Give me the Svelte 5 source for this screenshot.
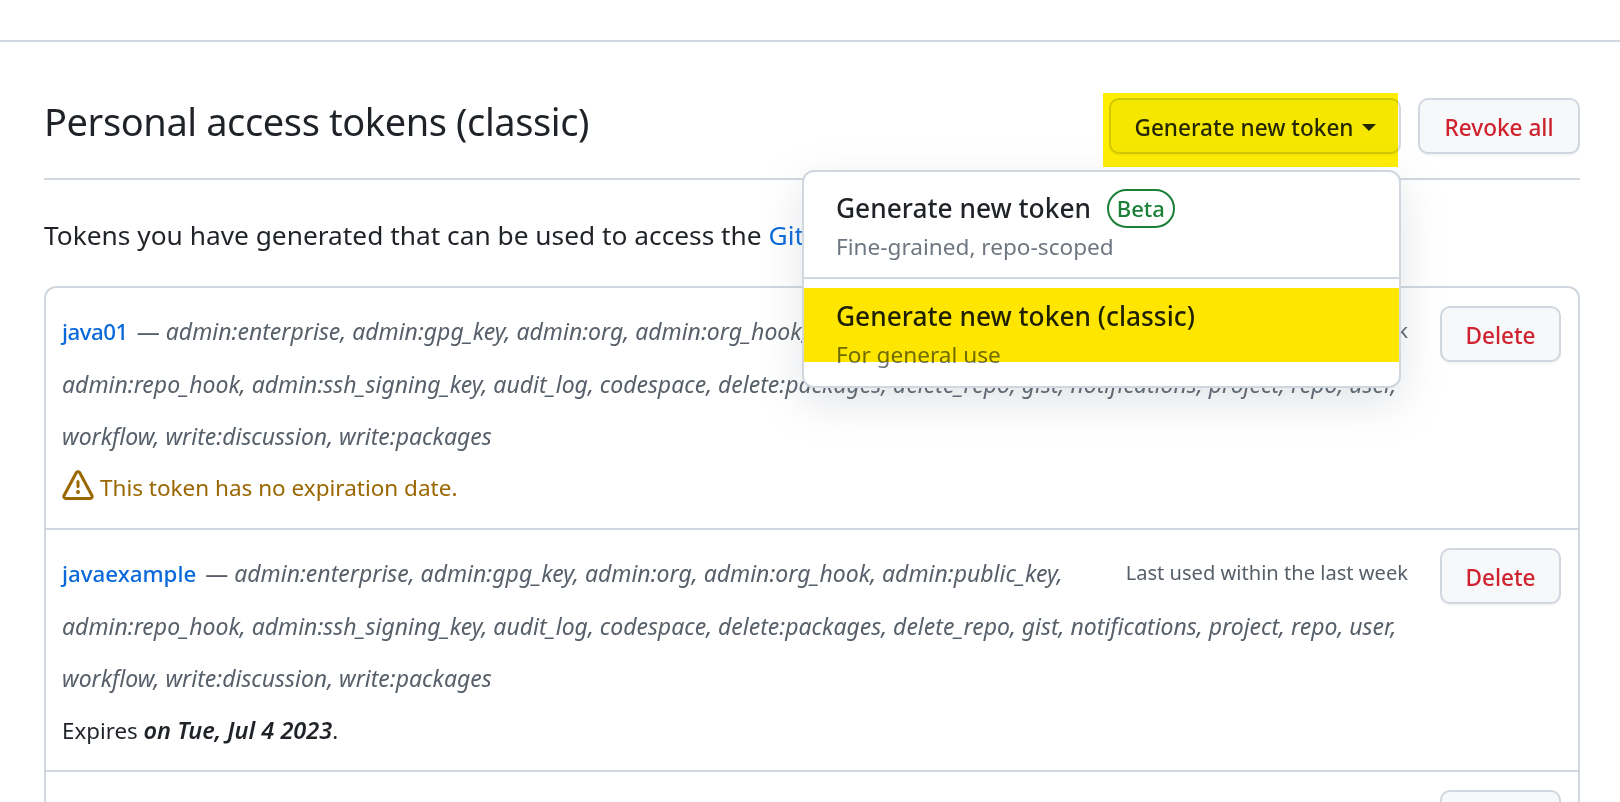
<script>
  const scopes = {
    l1: 'admin:enterprise, admin:gpg_key, admin:org, admin:org_hook, admin:public_key,',
    l2: 'admin:repo_hook, admin:ssh_signing_key, audit_log, codespace, delete:packages, delete_repo, gist, notifications, project, repo, user,',
    l3: 'workflow, write:discussion, write:packages'
  };
</script>

<div class="page">
  <div class="topbar"></div>
  <main class="content">
    <header class="subhead">
      <h2>Personal access tokens (classic)</h2>
      <div class="actions">
        <div class="gen-wrap">
          <button class="btn gen">Generate new token <span class="caret"></span></button>
          <div class="hl hl-btn"></div>
          <div class="menu">
            <div class="menu-item first">
              <div class="mi-title">Generate new token <span class="beta">Beta</span></div>
              <div class="mi-sub">Fine-grained, repo-scoped</div>
            </div>
            <div class="menu-item second">
              <div class="mi-title">Generate new token (classic)</div>
              <div class="mi-sub">For general use</div>
            </div>
            <div class="hl hl-item"></div>
          </div>
        </div>
        <button class="btn danger">Revoke all</button>
      </div>
    </header>
    <p class="intro">Tokens you have generated that can be used to access the <a href="#api">GitHub API</a>.</p>
    <div class="box">
      <div class="row">
        <div class="info">
          <span class="last">Last used within the last week</span>
          <a href="#t1" class="name short">java01</a> — <em>{scopes.l1}</em><br />
          <em>{scopes.l2}</em><br />
          <em>{scopes.l3}</em>
          <div class="warn">
            <svg viewBox="0 0 16 16" class="alert"><path fill="currentColor" d="M6.457 1.047c.659-1.234 2.427-1.234 3.086 0l6.082 11.378A1.75 1.75 0 0 1 14.082 15H1.918a1.75 1.75 0 0 1-1.543-2.575Zm1.763.707a.25.25 0 0 0-.44 0L1.698 13.132a.25.25 0 0 0 .22.368h12.164a.25.25 0 0 0 .22-.368Zm.53 3.996v2.5a.75.75 0 0 1-1.5 0v-2.5a.75.75 0 0 1 1.5 0ZM9 11a1 1 0 1 1-2 0 1 1 0 0 1 2 0Z"/></svg>
            This token has no expiration date.
          </div>
        </div>
        <button class="btn danger del">Delete</button>
      </div>
      <div class="row">
        <div class="info">
          <span class="last">Last used within the last week</span>
          <a href="#t2" class="name">javaexample</a> — <em>{scopes.l1}</em><br />
          <em>{scopes.l2}</em><br />
          <em>{scopes.l3}</em>
          <div class="exp">Expires <strong>on Tue, Jul 4 2023</strong>.</div>
        </div>
        <button class="btn danger del">Delete</button>
      </div>
      <div class="row">
        <div class="info"></div>
        <button class="btn danger del">Delete</button>
      </div>
    </div>
  </main>
</div>

<style>
  :global(html), :global(body) { margin: 0; background: #fff; overflow: hidden; }
  .page {
    height: 802px; overflow: hidden;
    font-family: "Noto Sans", "Open Sans", sans-serif;
    font-size: 23px; color: #1f2328;
  }
  .topbar { height: 40px; border-bottom: 2px solid #d0d7de; }
  .content { padding: 0 40px 0 44px; }
  .subhead {
    display: flex; justify-content: space-between; align-items: flex-start;
    height: 138px; padding-top: 56px; box-sizing: border-box;
    border-bottom: 2px solid #d0d7de;
  }
  h2 { margin: -2px 0 0; font-size: 38px; font-weight: 400; line-height: 50px; letter-spacing: -0.4px; }
  .actions { display: flex; gap: 17px; }
  .gen-wrap { position: relative; }
  .btn {
    font: inherit; font-size: 22.6px; font-weight: 500; height: 56px; box-sizing: border-box;
    border: 2px solid #d0d7de; border-radius: 10px; background: #f6f8fa; color: #24292f;
    padding: 2px 24px 0; box-shadow: 0 2px 0 rgba(31,35,40,.04); white-space: nowrap;
    display: flex; align-items: center;
  }
  .gen { width: 292px; justify-content: center; gap: 8px; }
  .caret { width: 0; height: 0; border: 7.5px solid transparent; border-top-color: currentColor; border-bottom: 0; }
  .danger { color: #cf222e; width: 162px; justify-content: center; }
  .del { width: 121px; flex: none; padding-top: 3px; margin-top: 1px; }
  .hl { position: absolute; background: #ffe600; mix-blend-mode: multiply; }
  .hl-btn { left: -6px; top: -5px; width: 295px; height: 74px; background: #ffee00; }
  .menu {
    position: absolute; z-index: 5; top: 72px; right: 0; width: 599px; height: 218px; box-sizing: border-box;
    background: #fff; border: 2px solid #d0d7de; border-radius: 12px;
    box-shadow: 0 14px 42px rgba(140,149,159,.25);
  }
  .menu-item { padding: 0 32px; box-sizing: border-box; }
  .first { height: 107px; padding-top: 18px; border-bottom: 2px solid #d0d7de; }
  .second { padding-top: 19px; }
  .mi-title { font-size: 26.3px; font-weight: 500; height: 36px; line-height: 36px; display: flex; align-items: center; gap: 9px; white-space: pre; }
  .mi-sub { font-size: 22.6px; color: #6e7781; line-height: 34px; margin-top: 4px; }
  .beta {
    color: #1a7f37; border: 2px solid #1a7f37; border-radius: 20px; font-size: 22px; font-weight: 500;
    line-height: 35px; padding: 0 8px;
  }
  .hl-item { left: 0; right: 0; top: 116px; height: 74px; }
  .intro { margin: 0; height: 106px; padding-top: 37px; box-sizing: border-box; line-height: 36px; font-size: 26.3px; }
  a { color: #0969da; text-decoration: none; }
  .box { border: 2px solid #d0d7de; border-radius: 12px; }
  .row {
    display: flex; gap: 32px; padding: 17px 17px 0 16px; height: 242px; box-sizing: border-box;
    border-bottom: 2px solid #d0d7de;
  }
  .info { flex: 1; line-height: 52px; color: #57606a; white-space: nowrap; min-width: 0; }
  .last { float: right; font-size: 20.1px; }
  .name { font-weight: 500; font-size: 22.3px; margin-right: 3px; }
  .short { letter-spacing: -0.5px; }
  .warn { color: #9a6700; display: flex; align-items: center; gap: 6px; font-size: 22.5px; }
  .alert { width: 32px; height: 32px; margin-top: -4px; }
  .exp { color: #1f2328; font-size: 22.3px; }
  .exp strong { font-style: italic; font-weight: 600; font-size: 23.5px; }
</style>
